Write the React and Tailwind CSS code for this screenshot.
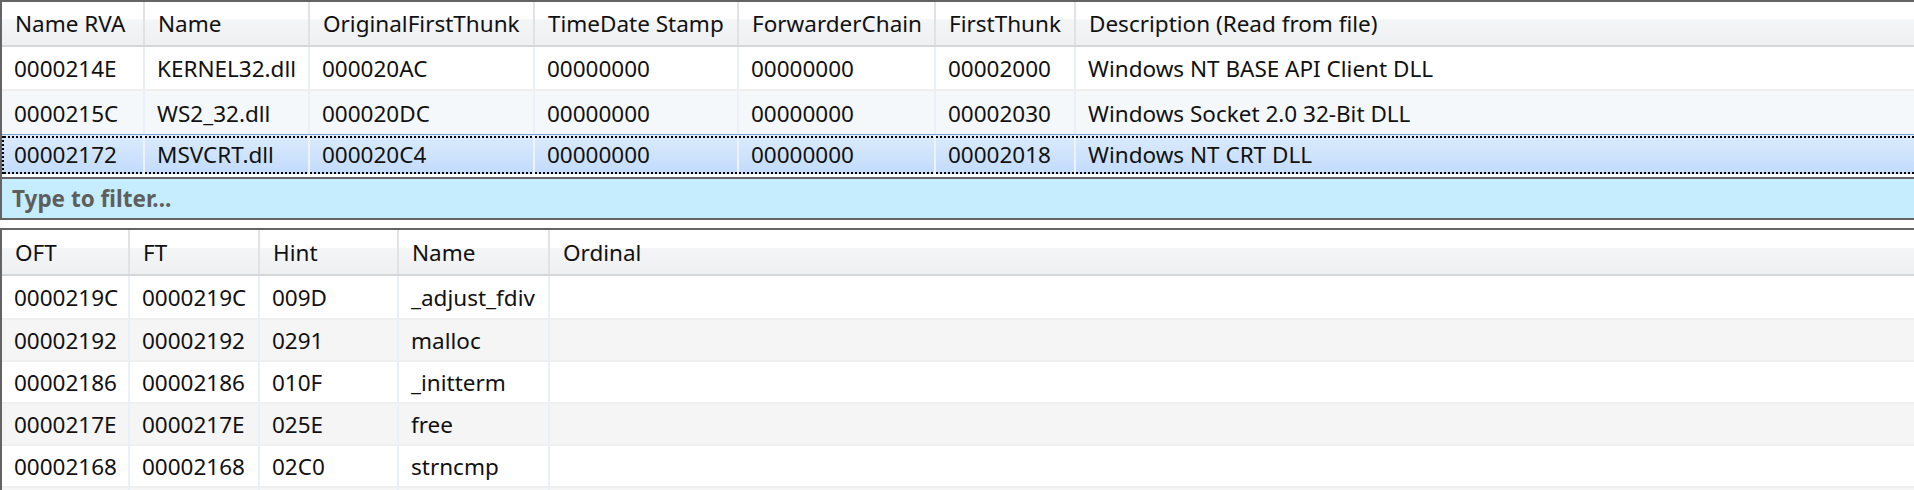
import React from "react";

const topCols = [
  { label: "Name RVA", w: "w-[143px]" },
  { label: "Name", w: "w-[165px]" },
  { label: "OriginalFirstThunk", w: "w-[225px]" },
  { label: "TimeDate Stamp", w: "w-[204px]" },
  { label: "ForwarderChain", w: "w-[197px]" },
  { label: "FirstThunk", w: "w-[140px]" },
  { label: "Description (Read from file)", w: "flex-1" },
];

const topRows = [
  ["0000214E", "KERNEL32.dll", "000020AC", "00000000", "00000000", "00002000", "Windows NT BASE API Client DLL"],
  ["0000215C", "WS2_32.dll", "000020DC", "00000000", "00000000", "00002030", "Windows Socket 2.0 32-Bit DLL"],
  ["00002172", "MSVCRT.dll", "000020C4", "00000000", "00000000", "00002018", "Windows NT CRT DLL"],
];

const botCols = [
  { label: "OFT", w: "w-[128px]" },
  { label: "FT", w: "w-[130px]" },
  { label: "Hint", w: "w-[139px]" },
  { label: "Name", w: "w-[151px]" },
  { label: "Ordinal", w: "flex-1" },
];

const botRows = [
  ["0000219C", "0000219C", "009D", "_adjust_fdiv", ""],
  ["00002192", "00002192", "0291", "malloc", ""],
  ["00002186", "00002186", "010F", "_initterm", ""],
  ["0000217E", "0000217E", "025E", "free", ""],
  ["00002168", "00002168", "02C0", "strncmp", ""],
  ["", "", "", "", ""],
];

function Header({ cols, h }) {
  return (
    <div
      className={`flex ${h} border-b-2 border-[#d5d6d8] bg-[linear-gradient(to_bottom,#ffffff_0%,#ffffff_40%,#f4f5f7_41%,#eef0f2_100%)]`}
    >
      {cols.map((c, i) => (
        <div
          key={i}
          className={`${c.w} shrink-0 flex items-center pl-[13px] pt-[2px] whitespace-nowrap overflow-hidden ${
            i < cols.length - 1 ? "border-r-2 border-[#e1e2e4]" : ""
          }`}
        >
          {c.label}
        </div>
      ))}
    </div>
  );
}

function Row({ cols, cells, bg, h, top }) {
  return (
    <div className={`flex ${h} ${bg} ${top ? "border-t-2 border-[#efefef]" : ""}`}>
      {cols.map((c, i) => (
        <div
          key={i}
          className={`${c.w} shrink-0 flex items-center pl-[12px] pt-[3px] whitespace-nowrap overflow-hidden ${
            i < cols.length - 1 ? "border-r-2 border-[#e9f0f8]" : ""
          }`}
        >
          {cells[i]}
        </div>
      ))}
    </div>
  );
}

function SelectedRow({ cols, cells }) {
  return (
    <div className="flex h-[40px] border-t border-[#7da2ce] bg-[linear-gradient(to_bottom,#dcebfc,#c1dbfc)]">
      {cols.map((c, i) => (
        <div
          key={i}
          className={`${c.w} shrink-0 flex ${i < cols.length - 1 ? "border-r-2 border-[#eef3fb]" : ""}`}
        >
          {i === 0 && (
            <div className="w-[2px] mt-[1px] bg-[repeating-linear-gradient(to_bottom,#000_0px,#000_2px,transparent_2px,transparent_4px)]" />
          )}
          <div className="flex-1 flex flex-col min-w-0">
            <div className="h-[2px] mt-[1px] bg-[repeating-linear-gradient(to_right,#000_0px,#000_2px,transparent_2px,transparent_4px)]" />
            <div
              className={`flex-1 flex items-center ${i === 0 ? "pl-[10px]" : "pl-[12px]"} pt-[1px] whitespace-nowrap overflow-hidden`}
            >
              {cells[i]}
            </div>
            <div className="h-[2px] bg-[repeating-linear-gradient(to_right,#000_0px,#000_2px,transparent_2px,transparent_4px)]" />
          </div>
        </div>
      ))}
    </div>
  );
}

export default function App() {
  return (
    <div className="w-[1914px] h-[490px] overflow-hidden bg-white text-[#111] font-['Noto_Sans',sans-serif] text-[22.5px] leading-none">
      {/* Imports panel */}
      <div className="border-t-2 border-l-2 border-b-2 border-[#646464]">
        <Header cols={topCols} h="h-[45px]" />
        <Row cols={topCols} cells={topRows[0]} bg="bg-white" h="h-[42px]" />
        <Row cols={topCols} cells={topRows[1]} bg="bg-[#f4f8fb]" h="h-[45px]" top />
        <SelectedRow cols={topCols} cells={topRows[2]} />
        <div className="h-[3px] bg-white" />
        <div className="h-[41px] border-t-2 border-[#646464] bg-[#c6edfd] flex items-center pl-[10px] pt-[1px] font-bold text-[#5e5e5e]">
          Type to filter...
        </div>
      </div>
      <div className="h-[8px]" />
      {/* Functions panel */}
      <div className="border-t-2 border-l-2 border-[#646464]">
        <Header cols={botCols} h="h-[46px]" />
        {botRows.map((r, i) => (
          <Row
            key={i}
            cols={botCols}
            cells={r}
            bg={i % 2 === 0 ? "bg-white" : "bg-[#f5f5f5]"}
            h="h-[42px]"
            top={i > 0}
          />
        ))}
      </div>
    </div>
  );
}
